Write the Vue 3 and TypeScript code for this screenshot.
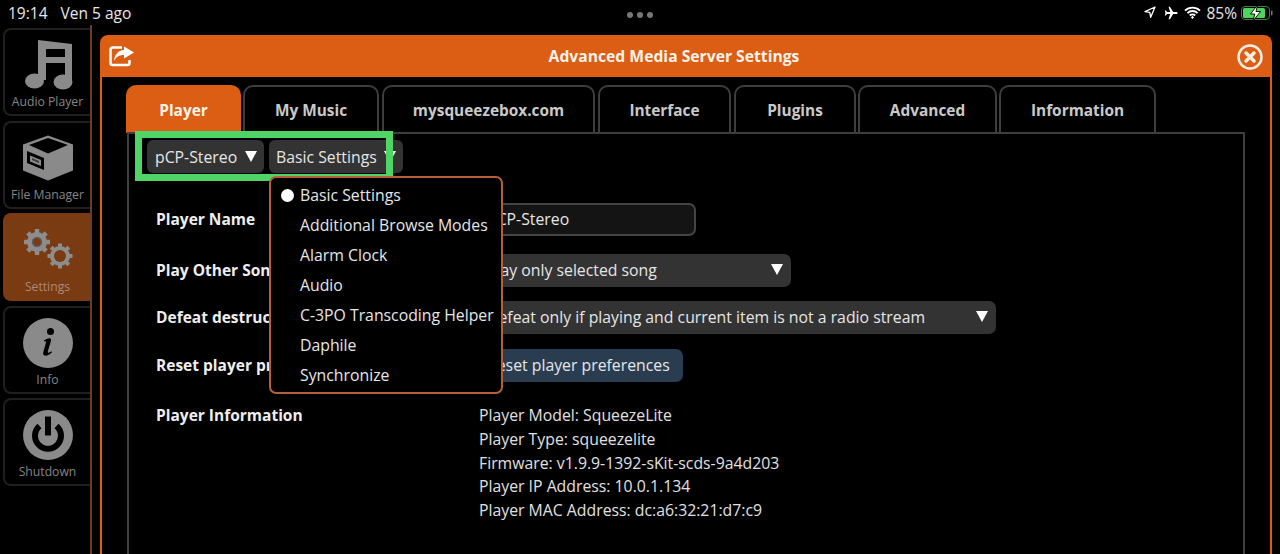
<script setup lang="ts">
const tabs = ['Player', 'My Music', 'mysqueezebox.com', 'Interface', 'Plugins', 'Advanced', 'Information']
const menu = ['Basic Settings', 'Additional Browse Modes', 'Alarm Clock', 'Audio', 'C-3PO Transcoding Helper', 'Daphile', 'Synchronize']
const info = ['Player Model: SqueezeLite', 'Player Type: squeezelite', 'Firmware: v1.9.9-1392-sKit-scds-9a4d203', 'Player IP Address: 10.0.1.134', 'Player MAC Address: dc:a6:32:21:d7:c9']
</script>

<template>
  <div class="screen">
    <header class="status">
      <div class="status-left"><span>19:14</span><span>Ven 5 ago</span></div>
      <div class="dots"><i></i><i></i><i></i></div>
      <div class="status-right">
        <svg class="s-loc" width="12" height="13" viewBox="0 0 12 13"><path d="M11 1 1 5.600l4.800.7.9 5z" fill="none" stroke="#fff" stroke-width="1.300" stroke-linejoin="round"/></svg>
        <svg class="s-air" width="14" height="14" viewBox="0 0 14 14"><path d="M13.600 7c0-.7-.8-1.100-1.600-1.100H9.200L5.900.8H4.600l1.600 5.100H3L1.900 4.400H.8l.7 2.600-.7 2.600h1.100L3 8.100h3.200l-1.600 5.100h1.300l3.300-5.100H12c.8 0 1.600-.4 1.600-1.100z" fill="#fff"/></svg>
        <svg class="s-wifi" width="17" height="13" viewBox="0 0 17 13"><path d="M1 4.600a10.800 10.800 0 0 1 15 0M3.400 7.100a7.300 7.300 0 0 1 10.200 0M5.800 9.500a3.800 3.800 0 0 1 5.400 0" fill="none" stroke="#fff" stroke-width="1.800"/><path d="m8.500 9.700 1.600 1.700-1.600 1.600-1.600-1.600z" fill="#fff"/></svg>
        <span class="pct">85%</span>
        <svg class="s-bat" width="32" height="16" viewBox="0 0 32 16"><rect x=".5" y="1.500" width="28" height="13" rx="3.500" fill="none" stroke="#3b8044"/><rect x="2" y="3" width="22" height="10" rx="1.500" fill="#4fd35f"/><rect x="30" y="5.500" width="1.500" height="5" rx=".7" fill="#777"/><path d="M16.500 0 9.500 9h4.300L12 16l7.500-9.500h-4.500z" fill="#fff" stroke="#000" stroke-width=".9"/></svg>
      </div>
    </header>

    <div class="main">
      <nav class="side">
        <div class="tile">
          <svg width="52" height="54" viewBox="0 0 52 54"><path d="M16 4 50 8V46H43V27H24V44H16ZM24 13H43V21H24Z" fill="#8a8a8a" fill-rule="evenodd"/><ellipse cx="12.500" cy="45" rx="9.500" ry="7.500" fill="#8a8a8a"/><ellipse cx="41" cy="46" rx="9.500" ry="7.500" fill="#8a8a8a"/></svg>
          <span>Audio Player</span>
        </div>
        <div class="tile">
          <svg width="54" height="48" viewBox="0 0 54 48">
            <path d="M27 .5 52 9.500V35.500L27 45.500 2 35.500V9.500z" fill="#8a8a8a"/>
            <path d="M27 3 47 10 27 18.500 8 10z" fill="#000"/>
            <path d="M6 16 23 23V35L6 28z" fill="#000"/>
            <path d="M9 20.500 20 25V31L9 26.500z" fill="#8a8a8a"/>
            <path d="M11 23 18 26V28L11 25z" fill="#3c3c3c"/>
          </svg>
          <span>File Manager</span>
        </div>
        <div class="tile active">
          <svg width="54" height="50" viewBox="0 0 54 50">
            <g fill="#8d8d8d">
              <circle cx="16" cy="17" r="10"/>
              <g stroke="#8d8d8d" stroke-width="4.500"><path d="M16 4v26M3 17h26M6.800 7.800l18.400 18.400M25.200 7.800 6.800 26.200"/></g>
              <circle cx="39" cy="31" r="10"/>
              <g stroke="#8d8d8d" stroke-width="4"><path d="M39 18.500v25M26.500 31h25M30.200 22.200l17.600 17.600M47.800 22.200l-17.600 17.600"/></g>
            </g>
            <circle cx="16" cy="17" r="4.500" fill="#7a3a12" stroke="#5f5f5f" stroke-width="1.500"/>
            <circle cx="39" cy="31" r="6" fill="#7a3a12"/>
          </svg>
          <span>Settings</span>
        </div>
        <div class="tile">
          <svg width="50" height="50" viewBox="0 0 50 50"><circle cx="25" cy="25" r="25" fill="#8a8a8a"/><circle cx="27.500" cy="13.500" r="3.500" fill="#000"/><path d="M21 22.500c2-1.500 5-3 6.500-2 1 .8.400 2.500-.1 4.200l-2.400 8c-.5 1.800.2 2.300 1.400 1.800l2-1.300.6 1c-2.500 2.400-5.500 4-7.500 3.300-1.700-.6-1.500-2.500-1-4.300l2.300-7.900c.4-1.500.3-2.200-.5-2.100l-1 .4z" fill="#000"/></svg>
          <span>Info</span>
        </div>
        <div class="tile">
          <svg width="50" height="50" viewBox="0 0 50 50"><circle cx="25" cy="25" r="25" fill="#8a8a8a"/><path d="M16.500 16a13 13 0 1 0 17 0" fill="none" stroke="#000" stroke-width="6"/><rect x="22" y="6.500" width="6" height="19" fill="#000"/></svg>
          <span>Shutdown</span>
        </div>
      </nav>

      <section class="dialog">
        <div class="head">
          <svg class="h-share" width="26" height="22" viewBox="0 0 26 22"><path d="M13 2.500H3.500a2 2 0 0 0-2 2V18a2 2 0 0 0 2 2h15a2 2 0 0 0 2-2v-3" fill="none" stroke="#fff" stroke-width="2.500"/><path d="M15 1.500 25 7.500 15 13.500V10C10 10 7 12 5 16c.5-6 4-10.500 10-11z" fill="#fff"/></svg>
          <h1>Advanced Media Server Settings</h1>
          <svg class="h-close" width="26" height="26" viewBox="0 0 26 26"><circle cx="13" cy="13" r="11.500" fill="none" stroke="#fbeee3" stroke-width="2.500"/><path d="m9 9 8 8m0-8-8 8" stroke="#fbeee3" stroke-width="3.500" stroke-linecap="round"/></svg>
        </div>
        <div class="panel">
          <div class="tabs">
            <div v-for="(t, i) in tabs" :key="t" class="tab" :class="['t' + i, { on: i === 0 }]">{{ t }}</div>
          </div>
          <div class="content">
            <div class="pickers">
              <div class="pick p1">pCP-Stereo<b class="arrow"></b></div>
              <div class="pick p2">Basic Settings<b class="arrow"></b></div>
            </div>

            <div class="row r1"><label>Player Name</label><div class="ctl input">pCP-Stereo</div></div>
            <div class="row r2"><label>Play Other Songs in Album</label><div class="ctl sel w2">Play only selected song<b class="arrow"></b></div></div>
            <div class="row r3"><label>Defeat destructive Touch-to-Play</label><div class="ctl sel w3">Defeat only if playing and current item is not a radio stream<b class="arrow"></b></div></div>
            <div class="row r4"><label>Reset player preferences</label><div class="ctl btn">Reset player preferences</div></div>
            <div class="row r5"><label>Player Information</label><div class="info"><div v-for="l in info" :key="l">{{ l }}</div></div></div>

            <div class="hilite"></div>
            <ul class="menu">
              <li v-for="(m, i) in menu" :key="m"><i v-if="i === 0" class="dot"></i>{{ m }}</li>
            </ul>
          </div>
        </div>
      </section>
    </div>
  </div>
</template>

<style scoped>
.screen { width: 1280px; height: 554px; background: #000; color: #eee; overflow: hidden; display: flex; flex-direction: column; font-family: "Open Sans", "Noto Sans", sans-serif; font-size: 15.800px; }
.status { height: 25px; flex: none; display: flex; align-items: center; justify-content: space-between; position: relative; padding: 0 8px; font-size: 15.500px; color: #e8e8e8; }
.status-left { display: flex; gap: 13px; }
.dots { position: absolute; left: 627px; top: 12px; display: flex; gap: 4px; }
.dots i { width: 6px; height: 6px; border-radius: 50%; background: #777; }
.status-right { display: flex; align-items: center; }
.s-air { margin-left: 8px; }
.s-wifi { margin-left: 6px; }
.pct { margin-left: 5px; }
.s-bat { margin-left: 4px; margin-right: -1px; }
.main { flex: 1; display: flex; min-height: 0; }
.side { width: 92px; flex: none; box-sizing: border-box; padding: 3px 0 0 3px; border-right: 2px solid #6a3d26; display: flex; flex-direction: column; gap: 4.500px; }
.tile { width: 87px; height: 88px; flex: none; box-sizing: border-box; border: 2px solid #1f1f1f; border-right: 0; border-radius: 8px 0 0 8px; display: flex; flex-direction: column; align-items: center; justify-content: flex-end; padding-bottom: 4px; gap: 4px; color: #858585; font-size: 12.200px; line-height: 16px; }
.tile svg { flex: none; }
.tile.active { background: #7a3a12; border-color: #7a3a12; color: #a98b78; }
.dialog { flex: 1; margin: 10px 8px 0; display: flex; flex-direction: column; min-width: 0; height: 600px; }
.head { height: 42px; flex: none; background: #db5e14; border-radius: 8px 8px 0 0; display: flex; align-items: center; justify-content: center; position: relative; }
.head h1 { margin: 0; font-size: 15.700px; font-weight: 700; color: #fdf2e8; transform: translateX(-12px); }
.h-share { position: absolute; left: 9px; top: 10px; }
.h-close { position: absolute; right: 9px; top: 9px; }
.panel { flex: 1; border: 2px solid #db5e14; border-top: 0; border-bottom: 0; padding: 8px 25px 0 24px; display: flex; flex-direction: column; }
.tabs { display: flex; height: 47px; flex: none; }
.tab { box-sizing: border-box; height: 48px; border: 2px solid #3e3e3e; border-bottom: 0; border-radius: 10px 10px 0 0; display: flex; align-items: center; justify-content: center; font-weight: 700; font-size: 15.400px; color: #c9c9c9; margin-right: 3px; }
.tab.on { background: #db5e14; border-color: #db5e14; color: #fdf2e8; }
.t0 { width: 115px; margin-right: 2px; } .t1 { width: 136px; } .t2 { width: 213px; } .t3 { width: 133px; } .t4 { width: 122px; margin-right: 2px; } .t5 { width: 139px; margin-right: 2px; } .t6 { width: 157px; }
.content { position: relative; margin-left: 1px; border: 2px solid #3e3e3e; border-bottom: 0; padding: 6px 0 0 27px; flex: 1; }
.pickers { display: flex; gap: 5px; margin-left: -9px; margin-bottom: 30px; }
.pick { height: 33px; box-sizing: border-box; background: #333; border-radius: 6px; display: flex; align-items: center; padding: 0 7px 0 8px; color: #e6e6e6; }
.p1 { width: 117px; }
.p2 { width: 134px; padding-left: 7px; }
.arrow { width: 0; height: 0; border-left: 6.500px solid transparent; border-right: 6.500px solid transparent; border-top: 11px solid #fff; margin-left: auto; }
.row { display: flex; align-items: center; }
.row label { width: 315px; flex: none; font-weight: 700; font-size: 15.500px; color: #eee; white-space: nowrap; overflow: hidden; padding-bottom: 2px; }
.ctl { box-sizing: border-box; height: 33px; display: flex; align-items: center; padding: 0 8px 2px 16px; border-radius: 7px; color: #e6e6e6; }
.input { width: 225px; background: #141414; border: 2px solid #444; padding-left: 14px; }
.sel { background: #333; }
.w2 { width: 320px; }
.w3 { width: 525px; }
.btn { width: 212px; background: #2a3d50; }
.r1 { margin-bottom: 18px; }
.r2 { margin-bottom: 14px; }
.r3 { margin-bottom: 15px; }
.r4 { margin-bottom: 21px; }
.r5 { align-items: flex-start; }
.r5 label { line-height: 24px; }
.info { margin: 1px 0 0 8px; line-height: 23.800px; color: #e0e0e0; }
.hilite { position: absolute; left: 6px; top: -3px; width: 258px; height: 50px; box-sizing: border-box; border: 7px solid #4fd565; }
.menu { position: absolute; left: 140px; top: 42px; width: 234px; height: 218px; box-sizing: border-box; margin: 0; padding: 2px 0 0; list-style: none; background: #000; border: 2px solid #b5603a; border-radius: 7px; }
.menu li { height: 30px; display: flex; align-items: center; padding-left: 29px; color: #e6e6e6; position: relative; white-space: nowrap; }
.dot { position: absolute; left: 10px; top: 9px; width: 13px; height: 13px; border-radius: 50%; background: #fff; }
</style>
